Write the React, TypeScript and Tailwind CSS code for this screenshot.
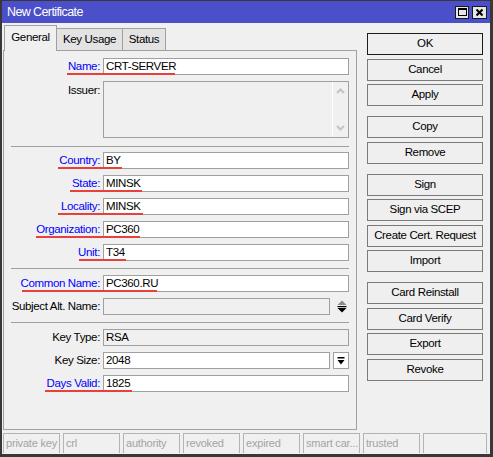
import React from 'react';

type Field = {
  label: string;
  value?: string;
  blue?: boolean;
  mark?: [number, number];
  kind?: 'text' | 'disabled' | 'issuer' | 'spinner' | 'dropdown';
};

const groups: Field[][] = [
  [
    { label: 'Name:', value: 'CRT-SERVER', blue: true, mark: [67, 175] },
    { label: 'Issuer:', kind: 'issuer' },
  ],
  [
    { label: 'Country:', value: 'BY', blue: true, mark: [58, 122] },
    { label: 'State:', value: 'MINSK', blue: true, mark: [70, 142] },
    { label: 'Locality:', value: 'MINSK', blue: true, mark: [58, 143] },
    { label: 'Organization:', value: 'PC360', blue: true, mark: [36, 140] },
    { label: 'Unit:', value: 'T34', blue: true, mark: [79, 126] },
  ],
  [
    { label: 'Common Name:', value: 'PC360.RU', blue: true, mark: [22, 157] },
    { label: 'Subject Alt. Name:', kind: 'spinner' },
  ],
  [
    { label: 'Key Type:', value: 'RSA', kind: 'disabled' },
    { label: 'Key Size:', value: '2048', kind: 'dropdown' },
    { label: 'Days Valid:', value: '1825', blue: true, mark: [45, 132] },
  ],
];

const buttonGroups = [
  ['OK', 'Cancel', 'Apply'],
  ['Copy', 'Remove'],
  ['Sign', 'Sign via SCEP', 'Create Cert. Request', 'Import'],
  ['Card Reinstall', 'Card Verify', 'Export', 'Revoke'],
];

const flags = ['private key', 'crl', 'authority', 'revoked', 'expired', 'smart car...', 'trusted'];

const Row = ({ field }: { field: Field }) => {
  const kind = field.kind ?? 'text';

  return (
    <div className={`relative flex ${kind === 'issuer' ? 'items-start' : 'items-center h-[17px]'}`}>
      <div
        className={`w-[96px] text-right leading-[17px] whitespace-nowrap ${
          kind === 'issuer' ? 'mt-[1px]' : ''
        } ${field.blue ? 'text-[#0000ff]' : 'text-black'}`}
      >
        {field.label}
      </div>

      {kind === 'issuer' && (
        <div className="ml-[3px] w-[246px] h-[57px] border border-[#a0a0a0] bg-[#f0f0f0] flex justify-end">
          <div className="w-[16px] border-l border-white flex flex-col items-center justify-between py-[6px]">
            <svg width="9" height="6" viewBox="0 0 9 6">
              <polyline points="1,5 4.5,1.5 8,5" fill="none" stroke="#c4c4c4" strokeWidth="2" />
            </svg>
            <svg width="9" height="6" viewBox="0 0 9 6">
              <polyline points="1,1 4.5,4.5 8,1" fill="none" stroke="#c4c4c4" strokeWidth="2" />
            </svg>
          </div>
        </div>
      )}

      {kind === 'text' && (
        <div className="ml-[3px] w-[246px] h-[17px] border border-[#a0a0a0] bg-white pl-[2px] leading-[15px]">
          {field.value}
        </div>
      )}

      {kind === 'disabled' && (
        <div className="ml-[3px] w-[246px] h-[17px] border border-[#a0a0a0] bg-[#f0f0f0] pl-[2px] leading-[15px]">
          {field.value}
        </div>
      )}

      {kind === 'spinner' && (
        <>
          <div className="ml-[3px] w-[227px] h-[17px] border border-[#a0a0a0] bg-[#f0f0f0]" />
          <svg className="ml-[7px]" width="10" height="13" viewBox="0 0 10 13">
            <polygon points="0.5,5 5,0.5 9.5,5" fill="#8a8a8a" />
            <rect x="0.5" y="6" width="9" height="1.2" fill="#000" />
            <polygon points="0.5,8 9.5,8 5,12.5" fill="#000" />
          </svg>
        </>
      )}

      {kind === 'dropdown' && (
        <>
          <div className="ml-[3px] w-[227px] h-[17px] border border-[#a0a0a0] bg-white pl-[2px] leading-[15px]">
            {field.value}
          </div>
          <div className="ml-[3px] w-[16px] h-[17px] border border-[#a0a0a0] bg-white flex items-center justify-center">
            <svg width="8" height="8" viewBox="0 0 8 8">
              <rect x="0.5" y="0" width="7" height="1.5" fill="#000" />
              <polygon points="0.5,3 7.5,3 4,7.5" fill="#000" />
            </svg>
          </div>
        </>
      )}

      {field.mark && (
        <div
          className="absolute bottom-0 h-[2px] bg-[#e8403a] z-10"
          style={{ left: field.mark[0] - 4, width: field.mark[1] - field.mark[0] }}
        />
      )}
    </div>
  );
};

const App = () => {
  return (
    <div className="w-[493px] h-[457px] flex flex-col bg-[#f0f0f0] border-t border-l-2 border-r-[3px] border-b-[3px] border-[#383838] font-['Liberation_Sans',Arial,sans-serif] text-[11.5px] tracking-[-0.35px] text-black overflow-hidden">
      {/* title bar */}
      <div className="h-[22px] shrink-0 bg-[#4b4fc9] flex items-center pl-[5px] pr-[3px]">
        <span className="text-white text-[12.5px] tracking-[-0.6px]">New Certificate</span>
        <div className="ml-auto flex gap-[3px]">
          <div className="w-[14px] h-[13px] bg-[#e6e6e6] border border-[#1a1a1a] flex items-center justify-center">
            <div className="w-[9px] h-[8px] border border-black border-t-2" />
          </div>
          <div className="w-[15px] h-[13px] bg-[#e6e6e6] border border-[#1a1a1a] flex items-center justify-center">
            <svg width="7" height="7" viewBox="0 0 7 7">
              <line x1="0.5" y1="0.5" x2="6.5" y2="6.5" stroke="#000" strokeWidth="2" />
              <line x1="6.5" y1="0.5" x2="0.5" y2="6.5" stroke="#000" strokeWidth="2" />
            </svg>
          </div>
        </div>
      </div>

      <div className="flex-1 flex flex-col">
        <div className="flex pt-[2px]">
          {/* tabs + panel */}
          <div className="ml-[1px] w-[354px] flex flex-col">
            <div className="h-[25px] flex items-end pl-[1px]">
              <div className="relative z-10 w-[53px] h-[26px] -mb-px bg-[#f0f0f0] border border-b-0 border-[#a0a0a0] flex items-center justify-center pb-[2px]">
                General
              </div>
              <div className="w-[66px] h-[22px] bg-[#e3e3e3] border-t border-r border-[#a0a0a0] flex items-center justify-center">
                Key Usage
              </div>
              <div className="w-[43px] h-[22px] bg-[#e3e3e3] border-t border-r border-[#a0a0a0] flex items-center justify-center">
                Status
              </div>
            </div>

            <div className="h-[380px] border border-[#a0a0a0] pt-[7px]">
              {groups.map((group, index) => (
                <div key={index}>
                  {index > 0 && (
                    <div
                      className={`ml-[7px] w-[338px] h-px bg-[#a0a0a0] ${
                        index === 1 ? 'mt-[8px] mb-[5px]' : 'mt-[7px] mb-[6px]'
                      }`}
                    />
                  )}
                  <div className="flex flex-col gap-[6px]">
                    {group.map((field) => (
                      <Row key={field.label} field={field} />
                    ))}
                  </div>
                </div>
              ))}
            </div>
          </div>

          {/* buttons */}
          <div className="ml-[10px] w-[116px] mt-[8px] flex flex-col gap-[10px]">
            {buttonGroups.map((group, index) => (
              <div key={index} className="flex flex-col gap-[3.5px]">
                {group.map((name) => (
                  <div
                    key={name}
                    className={`h-[22px] border bg-[#efefef] flex items-center justify-center ${
                      name === 'OK' ? 'border-[#1c1c1c]' : 'border-[#7a7a7a]'
                    }`}
                  >
                    {name}
                  </div>
                ))}
              </div>
            ))}
          </div>
        </div>

        {/* status bar */}
        <div className="mt-[3px] ml-[1px] flex gap-[3px] h-[20px] text-[11px] tracking-[-0.2px]">
          {flags.map((flag) => (
            <div
              key={flag}
              className="w-[57px] border border-b-0 border-[#b4b4b4] pl-[2px] leading-[18px] text-[#a3a3a3] whitespace-nowrap overflow-hidden"
            >
              {flag}
            </div>
          ))}
          <div className="w-[64px] border border-b-0 border-[#b4b4b4]" />
        </div>
      </div>
    </div>
  );
};

export default App;
